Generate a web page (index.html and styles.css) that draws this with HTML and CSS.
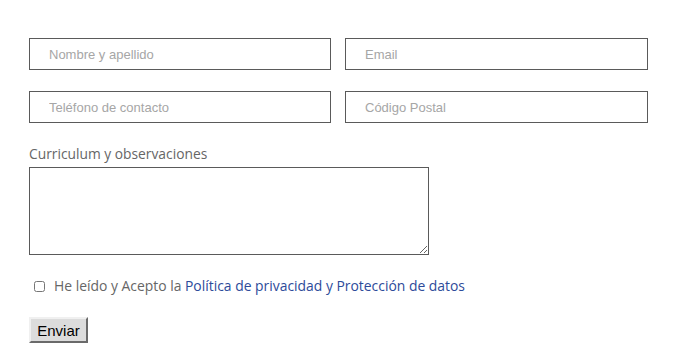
FILE: index.html
```html
<!DOCTYPE html>
<html>
<head>
<meta charset="utf-8">
<link rel="stylesheet" href="styles.css">
</head>
<body>
<form class="form">
  <div class="grid">
    <input class="field" type="text" placeholder="Nombre y apellido">
    <input class="field" type="text" placeholder="Email">
    <input class="field" type="text" placeholder="Teléfono de contacto">
    <input class="field" type="text" placeholder="Código Postal">
  </div>
  <label class="label">Curriculum y observaciones</label>
  <textarea class="area"></textarea>
  <div class="consent">
    <input class="check" type="checkbox">
    <span>He leído y Acepto la <a class="link" href="#">Política de privacidad y Protección de datos</a></span>
  </div>
  <button class="btn" type="button">Enviar</button>
</form>
</body>
</html>
```
FILE: styles.css
```css
html, body {
  margin: 0;
  padding: 0;
  background: #fff;
}
.form {
  padding: 38px 0 0 29px;
  display: flex;
  flex-direction: column;
  align-items: flex-start;
}
.grid {
  display: grid;
  grid-template-columns: 302px 303px;
  column-gap: 14px;
  row-gap: 21px;
}
.field {
  box-sizing: border-box;
  height: 32px;
  margin: 0;
  border: 1px solid #5a5a5a;
  padding: 0 19px;
  font-family: "Liberation Sans", Arial, sans-serif;
  font-size: 13px;
  color: #333;
  background: #fff;
  outline: none;
}
.field::placeholder {
  color: #a6a6a6;
}
.label {
  margin-top: 21px;
  margin-bottom: 3px;
  font-family: "Open Sans", "Noto Sans", sans-serif;
  font-size: 13.8px;
  line-height: 20px;
  color: #666;
}
.area {
  box-sizing: border-box;
  width: 400px;
  height: 88px;
  margin: 0;
  border: 1px solid #5a5a5a;
  resize: both;
  background: #fff;
}
.consent {
  margin-top: 21px;
  display: flex;
  align-items: center;
  font-family: "Open Sans", "Noto Sans", sans-serif;
  font-size: 13.9px;
  color: #666;
  line-height: 20px;
}
.check {
  width: 11px;
  height: 11px;
  margin: 0 9px 0 5px;
}
.link {
  color: #2d4b9a;
  text-decoration: none;
}
.btn {
  margin-top: 21px;
  box-sizing: border-box;
  width: 59px;
  height: 26px;
  padding: 0;
  font-family: "Liberation Sans", Arial, sans-serif;
  font-size: 15px;
  color: #000;
  background: #dcdcdc;
  border: 2px solid;
  border-color: #f0f0f0 #6a6a6a #6a6a6a #f0f0f0;
}
```
